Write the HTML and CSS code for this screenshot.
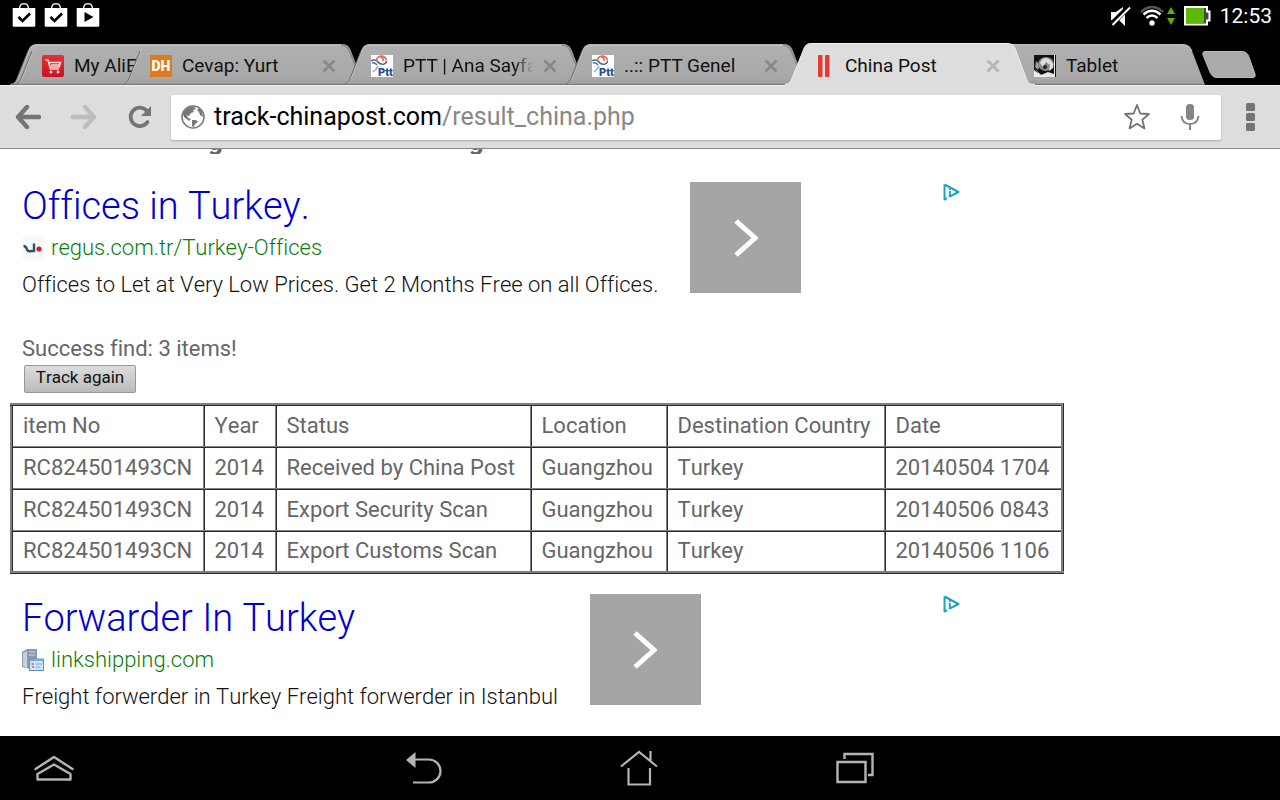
FILE: index.html
```html
<!DOCTYPE html>
<html lang="en">
<head>
<meta charset="utf-8">
<title>China Post</title>
<link rel="stylesheet" href="styles.css">
</head>
<body>
<svg class="defs" width="0" height="0" aria-hidden="true">
  <defs>
    <linearGradient id="tabFill" x1="0" y1="0" x2="0" y2="1">
      <stop offset="0" stop-color="#b0b0b0"/><stop offset=".85" stop-color="#a8a8a8"/><stop offset="1" stop-color="#999"/>
    </linearGradient>
    <linearGradient id="cartFill" x1="0" y1="0" x2="0" y2="1">
      <stop offset="0" stop-color="#e0343a"/><stop offset="1" stop-color="#c8141c"/>
    </linearGradient>
    <symbol id="tabShape" viewBox="0 0 244 41">
      <path d="M0 41 C5 40 6 37 8 32 L18 7 C20 2 22 0 27 0 H219 C225 0 227 2 229 7 L240 36 L244 41 Z" fill="url(#tabFill)"/>
      <path d="M219 1C224 1 226 3 228 8L239 36" fill="none" stroke="#8c8c8c" stroke-width="2"/>
      <path d="M1 40.500 C6 39 7 37 9 32 L19 7 C21 2.500 23 1.500 27 1.500 H219" fill="none" stroke="#c0c0c0" stroke-width="1"/>
      <path d="M0 40.500 C5 40 6 37 8 32 L18 7" fill="none" stroke="#6b6b6b" stroke-width="1"/>
      <path d="M0 40.500H242" stroke="#777"/>
    </symbol>
    <symbol id="ptt" viewBox="0 0 22 22">
      <rect width="22" height="22" fill="#fff"/>
      <path d="M0 6Q3 4 6 6Q9 10 13 9Q16 8 15 6M1 8Q4 7 6 10" fill="none" stroke="#4a6b8c" stroke-width="1.500"/>
      <path d="M6 6Q5 3 8 1.500Q14 0 15.500 5.500M9 2Q13 3 12 6" fill="none" stroke="#e0705c" stroke-width="1.700"/>
      <path d="M7 11Q6 14 2 17" fill="none" stroke="#8aa6c2" stroke-width="1.500"/>
      <text x="7" y="21" class="logo-ptt">Ptt</text>
    </symbol>
    <symbol id="close" viewBox="0 0 14 14"><path d="M1.500 1.500 12.500 12.500M12.500 1.500 1.500 12.500" stroke="currentColor" stroke-width="2.600"/></symbol>
    <symbol id="bag" viewBox="0 0 24 24">
      <path d="M7.500 6C7.500 2 9 .8 12 .8S16.500 2 16.500 6" fill="none" stroke="#ddd" stroke-width="1.500"/>
      <path d="M.7 5H23.300V22.500Q23.300 23.800 22 23.800H2Q.7 23.800 .7 22.500Z" fill="#fff"/>
    </symbol>
    <symbol id="adchoices" viewBox="0 0 17 18">
      <path d="M1.500 1.500 15.500 9 6.500 13.700M1.500 1.500V16.500L4 15.200" fill="none" stroke="#17a5c0" stroke-width="2" stroke-linejoin="round"/>
      <path d="M6.800 8V14M6.800 5.300V6.900" stroke="#17a5c0" stroke-width="2"/>
    </symbol>
    <symbol id="chevron" viewBox="0 0 24 38"><path d="M2 2 21 19 2 36" fill="none" stroke="#fff" stroke-width="5"/></symbol>
  </defs>
</svg>

<header class="status">
  <div class="status-left">
    <svg width="24" height="24"><use href="#bag"/><path d="M6.500 14 10.500 18 18 10.500" fill="none" stroke="#000" stroke-width="2.600"/></svg>
    <svg width="24" height="24"><use href="#bag"/><path d="M6.500 14 10.500 18 18 10.500" fill="none" stroke="#000" stroke-width="2.600"/></svg>
    <svg width="24" height="24"><use href="#bag"/><path d="M8.500 9V19L17.500 14Z" fill="#000"/></svg>
  </div>
  <div class="status-right">
    <svg width="20" height="20" viewBox="0 0 20 20"><path d="M0 6H5L12 1V3L1 14H0ZM14 7V20L8 14Z" fill="#fff"/><path d="M1 18.500 19 1" stroke="#000" stroke-width="4"/><path d="M1.500 19 19 1.500" stroke="#fff" stroke-width="2"/></svg>
    <svg width="24" height="22" viewBox="0 0 24 22"><g fill="none" stroke="#fff" stroke-width="2.400"><path d="M1 7Q12-3 23 7" stroke="#555"/><path d="M3.500 9.500Q12 2 20.500 9.500"/><path d="M6.500 13Q12 8 17.500 13"/></g><circle cx="12" cy="18" r="2.700" fill="#fff"/></svg>
    <svg width="8" height="18" viewBox="0 0 8 18"><path d="M4 0 8 7H0ZM4 18 8 11H0Z" fill="#59b300"/></svg>
    <svg width="27" height="20" viewBox="0 0 27 20"><path d="M1 1H23V5.500H25.500V14.500H23V18.500H1Z" fill="#444" stroke="#fff" stroke-width="2"/><path d="M2 2H20V17.500H2Z" fill="#5cb800"/></svg>
    <time>12:53</time>
  </div>
</header>

<nav class="tabs" aria-label="Open tabs">
  <div class="tab tab-back"><svg class="shape"><use href="#tabShape"/></svg></div>
  <div class="tab tab-stacked"><svg class="shape"><use href="#tabShape"/></svg>
    <svg class="fav" viewBox="0 0 22 22"><rect width="22" height="22" rx="2" fill="url(#cartFill)"/><path d="M3.500 5H6L8.500 14H17M6.800 7.500H18.500L17 12H8M9 10H17.500" fill="none" stroke="#ffd6d6" stroke-width="1.700"/><circle cx="9" cy="17" r="1.500" fill="#ffd6d6"/><circle cx="16" cy="17" r="1.500" fill="#ffd6d6"/></svg>
    <a class="label clip" href="#">My AliE</a></div>
  <div class="tab"><svg class="shape"><use href="#tabShape"/></svg>
    <svg class="fav" viewBox="0 0 22 22"><rect width="22" height="22" fill="#e07b1a"/><text x="11" y="16" text-anchor="middle" class="logo-dh">DH</text></svg>
    <a class="label" href="#">Cevap: Yurt</a><button class="close" aria-label="Close tab"><svg><use href="#close"/></svg></button></div>
  <div class="tab"><svg class="shape"><use href="#tabShape"/></svg>
    <svg class="fav"><use href="#ptt"/></svg>
    <a class="label fade" href="#">PTT | Ana Sayfa</a><button class="close" aria-label="Close tab"><svg><use href="#close"/></svg></button></div>
  <div class="tab"><svg class="shape"><use href="#tabShape"/></svg>
    <svg class="fav"><use href="#ptt"/></svg>
    <a class="label" href="#">..:: PTT Genel</a><button class="close" aria-label="Close tab"><svg><use href="#close"/></svg></button></div>
  <div class="tab tab-active"><svg class="shape" viewBox="0 0 250 43"><path d="M0 43V41.500C5 41 6 38 8 33L18 8C20 2 22 .5 27 .5H221C227 .5 229 2 231 8L241 35C243 40 244 41.500 250 41.500V43Z" fill="#ddd"/><path d="M0 41.500C5 41 6 38 8 33L18 8C20 2 22 .5 27 .5H221C227 .5 229 2 231 8L241 35C243 40 244 41.500 250 41.500" fill="none" stroke="#f2f2f2"/></svg>
    <svg class="fav" viewBox="0 0 22 22"><rect x="5" width="4.500" height="22" rx="1" fill="#e23c32"/><rect x="12" width="4.500" height="22" rx="1" fill="#e23c32"/></svg>
    <a class="label" href="#" aria-current="page">China Post</a><button class="close" aria-label="Close tab"><svg><use href="#close"/></svg></button></div>
  <div class="tab tab-last"><svg class="shape" viewBox="0 0 199 41"><path d="M0 0H176C182 0 184 2 186 7L199 41H0Z" fill="url(#tabFill)"/><path d="M0 1H176C182 1 184 3 186 7" fill="none" stroke="#c0c0c0"/><path d="M0 40.500H198" stroke="#777"/></svg>
    <svg class="fav" viewBox="0 0 22 22"><rect width="22" height="22" fill="#111"/><path d="M0 13 4 18 3 22H20V19L14 17 7 20Z" fill="#e8e8e8"/><ellipse cx="12" cy="9" rx="8" ry="7" fill="#888"/><path d="M6 8Q9 1 15 4Q20 7 19 13L15 16 16 10 12 7 9 12Z" fill="#ddd"/><circle cx="11" cy="12" r="2" fill="#222"/><path d="M2 6 6 10 4 15 1 12Z" fill="#999"/><path d="M0 15V22H12L5 19Z" fill="#eee"/><path d="M20.500 0V22" stroke="#eee"/></svg>
    <a class="label" href="#">Tablet</a></div>
  <button class="new-tab" aria-label="New tab"><svg width="54" height="27" viewBox="0 0 54 27"><path d="M3 .5H40Q45 .5 47 6L53 23Q54 26.500 51 26.500H15Q10 26.500 8 21L1 4Q0 .5 3 .5Z" fill="#aaa" stroke="#b8b8b8"/></svg></button>
</nav>

<form class="toolbar">
  <button type="button" aria-label="Back"><svg width="26" height="24" viewBox="0 0 26 24"><path d="M12 2 3 12 12 22M3 12H24" fill="none" stroke="#747474" stroke-width="4.400" stroke-linejoin="round" stroke-linecap="round"/></svg></button>
  <button type="button" aria-label="Forward"><svg width="26" height="24" viewBox="0 0 26 24"><path d="M14 2 23 12 14 22M23 12H2" fill="none" stroke="#bdbdbd" stroke-width="4.400" stroke-linejoin="round" stroke-linecap="round"/></svg></button>
  <button type="button" aria-label="Reload"><svg width="26" height="24" viewBox="0 0 26 24"><path d="M19 5A9.200 9.200 0 1 0 20.500 17" fill="none" stroke="#747474" stroke-width="3.800" stroke-linecap="round"/><path d="M24 1V11H14Z" fill="#747474"/></svg></button>
  <div class="omnibox">
    <svg width="24" height="24" viewBox="0 0 24 24"><circle cx="12" cy="12" r="11" fill="#fff" stroke="#777" stroke-width="1.500"/><path d="M4 5Q8 1 13 2L15 4 12 5 13 7 10 8 8 11 6 10 7 13 10 14 8 16 3 12 2 9ZM18 3 21 7 22 12 19 10 18 7 16 5ZM11 15 15 15 17 17 14 19 13 22 11 21 11 17Z" fill="#777"/></svg>
    <div class="url" role="textbox" aria-label="Address" tabindex="0">track-chinapost.com<span>/result_china.php</span></div>
    <button type="button" aria-label="Bookmark"><svg width="28" height="28" viewBox="0 0 28 28"><path d="M14 2 17.300 10.500 26 11 19.300 16.700 21.500 25.500 14 20.700 6.500 25.500 8.700 16.700 2 11 10.700 10.500Z" fill="none" stroke="#747474" stroke-width="1.800" stroke-linejoin="round"/></svg></button>
    <button type="button" aria-label="Voice search"><svg width="20" height="26" viewBox="0 0 20 26"><rect x="6" y="0" width="8" height="16" rx="3.500" fill="#858585"/><path d="M1.500 12C2 17 5 20 10 20S18 17 18.500 12M10 20V26" fill="none" stroke="#858585" stroke-width="2"/></svg></button>
  </div>
  <button type="button" class="more" aria-label="Menu"><svg width="9" height="28" viewBox="0 0 9 28"><g fill="#747474"><rect width="9" height="8" rx="1.500"/><rect y="10" width="9" height="8" rx="1.500"/><rect y="20" width="9" height="8" rx="1.500"/></g></svg></button>
</form>

<main>
  <div class="scrolled-heading"><span>g</span><span>g</span></div>

  <section class="ad">
    <div class="ad-text">
      <a class="ad-title" href="#">Offices in Turkey.</a>
      <div class="ad-url"><svg width="22" height="22" viewBox="0 0 22 22"><rect width="22" height="22" fill="#f8f8f6"/><path d="M1.500 9Q4 9 5 12.500Q6 15 9 14H12V6.500" fill="none" stroke="#2b5078" stroke-width="2.400"/><circle cx="17" cy="12" r="2.600" fill="#d01c35"/></svg><a href="#">regus.com.tr/Turkey-Offices</a></div>
      <p>Offices to Let at Very Low Prices. Get 2 Months Free on all Offices.</p>
    </div>
    <button class="ad-go" aria-label="Open advertisement"><svg width="24" height="38"><use href="#chevron"/></svg></button>
    <a class="ad-choices" href="#" aria-label="AdChoices"><svg width="17" height="18"><use href="#adchoices"/></svg></a>
  </section>

  <section class="result">
    <p>Success find: 3 items!</p>
    <button class="track">Track again</button>
    <table>
      <colgroup><col class="c-item"><col class="c-year"><col class="c-status"><col class="c-loc"><col class="c-dest"><col class="c-date"></colgroup>
      <tr><th>item No</th><th>Year</th><th>Status</th><th>Location</th><th>Destination Country</th><th>Date</th></tr>
      <tr><td>RC824501493CN</td><td>2014</td><td>Received by China Post</td><td>Guangzhou</td><td>Turkey</td><td>20140504 1704</td></tr>
      <tr><td>RC824501493CN</td><td>2014</td><td>Export Security Scan</td><td>Guangzhou</td><td>Turkey</td><td>20140506 0843</td></tr>
      <tr><td>RC824501493CN</td><td>2014</td><td>Export Customs Scan</td><td>Guangzhou</td><td>Turkey</td><td>20140506 1106</td></tr>
    </table>
  </section>

  <section class="ad">
    <div class="ad-text">
      <a class="ad-title" href="#">Forwarder In Turkey</a>
      <div class="ad-url"><svg width="22" height="22" viewBox="0 0 22 22"><path d="M0 3 5 0H15V13H8V20L0 18Z" fill="#8a9bac"/><path d="M1 4 5 2V19L1 17Z" fill="#c5d2dc"/><path d="M7 3H13M7 6H13" stroke="#cbd6df"/><rect x="7.500" y="10" width="14" height="11.500" fill="#cfe3fa" stroke="#5a8fd0"/><rect x="8" y="10" width="13.500" height="2" fill="#79a8e4"/><path d="M9.500 15H12M10 18H12" stroke="#d05a6a" stroke-width="1.500"/><path d="M13.500 15H20M13.500 18H18" stroke="#7ba4d4"/></svg><a href="#">linkshipping.com</a></div>
      <p>Freight forwerder in Turkey Freight forwerder in Istanbul</p>
    </div>
    <button class="ad-go" aria-label="Open advertisement"><svg width="24" height="38"><use href="#chevron"/></svg></button>
    <a class="ad-choices" href="#" aria-label="AdChoices"><svg width="17" height="18"><use href="#adchoices"/></svg></a>
  </section>
</main>

<footer class="navbar">
  <button aria-label="Show panel"><svg width="40" height="26" viewBox="0 0 40 26"><path d="M1.500 14 20 2 38.500 14M3.500 19 20 9.500 36.500 19V24.500H3.500Z" fill="none" stroke="#b4b4b4" stroke-width="2.400" stroke-linejoin="round" stroke-linecap="round"/></svg></button>
  <div class="nav-main">
    <button aria-label="Back"><svg width="36" height="34" viewBox="0 0 36 34"><path d="M0 9 9.500 1V17Z" fill="#b4b4b4"/><path d="M8 8.500H23A11.500 11.500 0 0 1 23 31.500H7" fill="none" stroke="#b4b4b4" stroke-width="2.200"/></svg></button>
    <button aria-label="Home"><svg width="38" height="36" viewBox="0 0 38 36"><path d="M1 16.500 19 2 37 16.500M30.500 1V11M8.500 18V34.500H30V18" fill="none" stroke="#b4b4b4" stroke-width="2.200"/></svg></button>
    <button aria-label="Recent apps"><svg width="38" height="32" viewBox="0 0 38 32"><path d="M1.500 10H29.500V30H1.500ZM8.500 7V2H36.500V23H32" fill="none" stroke="#b4b4b4" stroke-width="2.400"/></svg></button>
  </div>
</footer>
</body>
</html>
```

FILE: styles.css
```css
* { box-sizing: border-box; }
html, body { height: 100%; }
body {
  margin: 0;
  display: flex;
  flex-direction: column;
  overflow: hidden;
  background: #000;
  color: #666;
  font: 22px/26px Roboto, "Noto Sans", sans-serif;
  font-variant-ligatures: none;
}
p { margin: 0; }
a { color: inherit; text-decoration: none; }
svg { display: block; flex: none; }
button { padding: 0; border: 0; background: none; font: inherit; cursor: pointer; }
.defs { position: absolute; }

.status {
  flex: none;
  height: 32px;
  display: flex;
  align-items: center;
  justify-content: space-between;
  padding: 0 8px 0 12px;
  color: #fff;
}
.status-left { display: flex; gap: 8px; align-self: flex-start; padding-top: 3px; }
.status-right { display: flex; align-items: center; gap: 9px; font-size: 21px; }
.status-right svg:nth-child(3) { margin-left: -6px; }

.tabs {
  flex: none;
  display: flex;
  margin-top: 12px;
  height: 41px;
  padding-left: 10px;
  color: #111;
  font-size: 19px;
}
.tab {
  position: relative;
  flex: none;
  width: 244px;
  height: 41px;
  margin-right: -23px;
  padding: 2px 24px 0 28px;
  display: flex;
  align-items: center;
}
.tab-back { margin-right: -240px; }
.tab-stacked { margin-right: -136px; }
.tab-active { z-index: 2; width: 250px; height: 43px; margin-right: -29px; margin-top: -1px; padding-right: 29px; }
.tab-last { width: 199px; margin-right: 0; }
.shape { position: absolute; inset: 0; width: 100%; height: 100%; }
.fav { position: relative; width: 22px; height: 22px; margin-right: 10px; }
.label { position: relative; flex: 1; white-space: nowrap; overflow: hidden; }
.clip { flex: none; width: 64px; }
.fade { -webkit-mask-image: linear-gradient(90deg, #000 85%, transparent 100%); mask-image: linear-gradient(90deg, #000 85%, transparent 100%); }
.close { position: relative; margin: 0 0 0 10px; color: #888; }
.close svg { width: 14px; height: 14px; margin-right: 6px; }
.tab-active .close { color: #b4b4b4; }
.new-tab { align-self: flex-start; margin: 7px 0 0 -3px; }
.logo-dh { font: 900 14px Roboto, sans-serif; fill: #fff; }
.logo-ptt { font: 900 11px Roboto, sans-serif; fill: #1f4f8b; }

.toolbar {
  flex: none;
  display: flex;
  align-items: center;
  height: 64px;
  padding: 0 25px 0 15px;
  background: #ddd;
  border-top: 1px solid #f2f2f2;
  border-bottom: 1px solid #888;
}
.toolbar > button { margin-right: 30px; }
.toolbar > button:nth-of-type(3) { margin-right: 18px; }
.omnibox {
  flex: 1;
  display: flex;
  align-items: center;
  height: 45px;
  padding: 0 21px 0 10px;
  background: #fff;
  border-radius: 2px;
  box-shadow: 0 1px 2px #aaa;
}
.url { flex: 1; margin-left: 9px; color: #000; font-size: 25px; line-height: 32px; white-space: nowrap; }
.url span { color: #888; }
.omnibox button + button { margin-left: 29px; }
.toolbar > .more { margin: 0 0 0 25px; }

main { flex: 1; min-height: 0; overflow: hidden; background: #fff; font-kerning: none; }
.scrolled-heading {
  display: flex;
  align-items: flex-end;
  gap: 246px;
  height: 5px;
  padding-left: 208px;
  overflow: hidden;
  color: #666;
  font-size: 26px;
  font-weight: 700;
  line-height: 26px;
}
.ad {
  display: flex;
  align-items: flex-start;
  width: 75%;
  margin-top: 28px;
  padding-left: 22px;
  color: #111;
  font-weight: 300;
}
.ad-title { display: block; color: #00c; font-size: 38px; line-height: 48px; }
.ad-url { display: flex; align-items: center; gap: 7px; margin: 5px 0 11px; color: #0a7d0a; }
.ad-url a { line-height: 26px; }
.ad-go { width: 111px; height: 111px; margin-left: 32px; background: #a5a5a5; display: flex; align-items: center; justify-content: center; }
.ad-choices { margin: 1px 0 0 auto; }

.result { margin-top: 38px; padding-left: 10px; }
.result p { padding-left: 12px; }
.track {
  display: block;
  margin: 3px 0 10px 14px;
  width: 112px;
  height: 28px;
  padding-bottom: 4px;
  border: 1px solid #999;
  border-radius: 2px;
  background: linear-gradient(#ddd, #bbb);
  color: #111;
  font-size: 17px;
  line-height: 22px;
}
table { table-layout: fixed; width: 1054px; border-collapse: collapse; border: 3px ridge gray; }
th, td { height: 42px; padding: 0 9px 0 10px; border: 2px ridge gray; font-weight: 400; text-align: left; white-space: nowrap; }
.c-item { width: 192px; }
.c-year { width: 72px; }
.c-status { width: 255px; }
.c-loc { width: 136px; }
.c-dest { width: 218px; }
.result + .ad { margin-top: 20px; }

.navbar { flex: none; display: flex; align-items: center; height: 64px; padding-left: 34px; }
.nav-main { flex: 1; display: flex; justify-content: center; gap: 178px; padding-right: 74px; }
```
